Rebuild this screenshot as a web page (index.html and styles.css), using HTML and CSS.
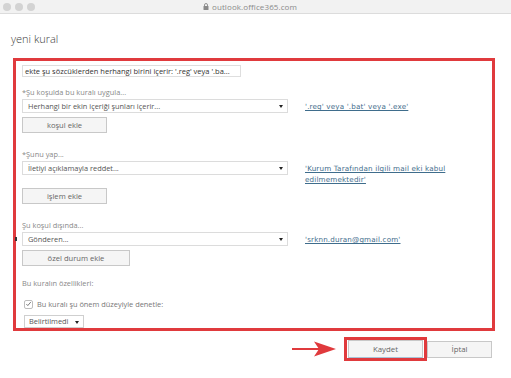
FILE: index.html
```html
<!DOCTYPE html>
<html lang="tr">

<head>
    <meta charset="UTF-8">
    <meta name="viewport" content="width=device-width, initial-scale=1.0">
    <title>yeni kural</title>
    <link rel="stylesheet" href="styles.css">
</head>

<body>

    <div class="titlebar">
        <div class="lights">
            <span></span><span></span><span></span>
        </div>
        <div class="url">
            <svg width="6" height="7" viewBox="0 0 6 7">
                <path d="M1.5 3V2a1.5 1.5 0 0 1 3 0v1" fill="none" stroke="#8a8a8a" stroke-width="0.9" />
                <rect x="0.5" y="3" width="5" height="4" rx="0.5" fill="#8a8a8a" />
            </svg>
            outlook.office365.com
        </div>
    </div>

    <h1 class="page-title">yeni kural</h1>

    <div class="rule-box">
        <div class="keyword">ekte şu sözcüklerden herhangi birini içerir: '.reg' veya '.ba...</div>

        <p class="label first">*Şu koşulda bu kuralı uygula...</p>
        <div class="row">
            <div class="select">Herhangi bir ekin içeriği şunları içerir...</div>
            <a class="value" href="#">'.reg' veya '.bat' veya '.exe'</a>
        </div>
        <button class="btn btn-small">koşul ekle</button>

        <p class="label">*Şunu yap...</p>
        <div class="row row-tight">
            <div class="select">İletiyi açıklamayla reddet...</div>
            <a class="value" href="#">'Kurum Tarafından ilgili mail eki kabul edilmemektedir'</a>
        </div>
        <button class="btn btn-small btn-after-wrap">işlem ekle</button>

        <p class="label">Şu koşul dışında...</p>
        <div class="row row-mark">
            <span class="mark"></span>
            <div class="select">Gönderen...</div>
            <a class="value" href="#">'srknn.duran@gmail.com'</a>
        </div>
        <button class="btn btn-wide">özel durum ekle</button>

        <p class="label props">Bu kuralın özellikleri:</p>
        <label class="check-row">
            <span class="checkbox">
                <svg width="8" height="8" viewBox="0 0 8 8">
                    <path d="M1.6 4.1l1.6 1.7L6.6 1.8" fill="none" stroke="#555" stroke-width="0.9" />
                </svg>
            </span>
            Bu kuralı şu önem düzeyiyle denetle:
        </label>
        <div class="select select-small">Belirtilmedi</div>
    </div>

    <div class="footer">
        <svg class="arrow" width="44" height="16" viewBox="0 0 44 16">
            <rect x="0" y="7" width="28" height="2" fill="#e03a3d" />
            <path d="M22 0.5L44 8 22 15.5 27 8z" fill="#e03a3d" />
        </svg>
        <div class="save-box">
            <button class="btn btn-footer">Kaydet</button>
        </div>
        <button class="btn btn-footer btn-cancel">İptal</button>
    </div>

</body>

</html>
```

FILE: styles.css
```css
body {
    margin: 0;
    background-color: #fff;
    font-family: "Open Sans", "Noto Sans", sans-serif;
    color: #444;
    width: 511px;
    height: 378px;
    overflow: hidden;
}

.titlebar {
    display: flex;
    align-items: center;
    height: 13px;
    background-color: #f2f2f2;
    border-bottom: 1px solid #dcdcdc;
}

.lights {
    display: flex;
    gap: 4px;
    padding-left: 3px;
}

.lights span {
    width: 8px;
    height: 8px;
    border-radius: 50%;
    background-color: #d3d3d3;
}

.url {
    display: flex;
    align-items: center;
    gap: 3px;
    margin-left: 168px;
    font-size: 8px;
    color: #8a8a8a;
    letter-spacing: 0.1px;
}

.page-title {
    margin: 17px 0 0 11px;
    font-size: 11px;
    line-height: 16px;
    font-weight: 300;
    color: #3a3a3a;
}

.rule-box {
    box-sizing: border-box;
    width: 482px;
    height: 273px;
    margin: 11px 0 0 13px;
    padding: 4px 0 0 6px;
    border: 3px solid #e03a3d;
}

.keyword {
    box-sizing: border-box;
    width: 219px;
    height: 12px;
    padding-left: 2px;
    border: 1px solid #dedede;
    font-size: 7.5px;
    line-height: 10px;
    color: #333;
    white-space: nowrap;
    overflow: hidden;
}

.label {
    margin: 16px 0 0;
    font-size: 7.4px;
    line-height: 10px;
    color: #888;
}

.label.first {
    margin-top: 10px;
}

.label.props {
    margin-top: 12px;
}

.row {
    display: flex;
    align-items: flex-start;
    gap: 17px;
    margin-top: 2px;
}

.row-mark {
    position: relative;
}

.mark {
    position: absolute;
    left: -7px;
    top: 5px;
    width: 2px;
    height: 4px;
    background-color: #333;
}

.select {
    box-sizing: border-box;
    position: relative;
    width: 266px;
    height: 14px;
    padding-left: 5px;
    border: 1px solid #dcdcdc;
    font-size: 7.4px;
    line-height: 12px;
    color: #555;
    flex-shrink: 0;
}

.select::after {
    content: "";
    position: absolute;
    right: 4px;
    top: 5px;
    border-left: 2.5px solid transparent;
    border-right: 2.5px solid transparent;
    border-top: 3px solid #222;
}

.select-small {
    width: 60px;
    height: 13px;
    margin: 6px 0 0 2px;
    padding-left: 4px;
    border-color: #cfcfcf;
    line-height: 11px;
}

.value {
    width: 176px;
    padding-top: 2px;
    font-family: "DejaVu Sans", Verdana, sans-serif;
    font-size: 7.2px;
    line-height: 11px;
    letter-spacing: 0.15px;
    color: #3f6d8c;
    text-decoration: underline;
}

.btn {
    display: block;
    box-sizing: border-box;
    margin: 4px 0 0;
    padding: 0;
    height: 16px;
    background-color: #f5f5f5;
    border: 1px solid #c8c8c8;
    font-family: "Open Sans", "Noto Sans", sans-serif;
    font-size: 7.6px;
    color: #666;
}

.btn-small {
    width: 85px;
}

.btn-after-wrap {
    margin-top: 3px;
}

.btn-wide {
    width: 108px;
}

.check-row {
    display: flex;
    align-items: center;
    gap: 4px;
    margin: 11px 0 0 2px;
    height: 10px;
    font-size: 7.4px;
    color: #777;
}

.checkbox {
    display: flex;
    box-sizing: border-box;
    width: 9px;
    height: 9px;
    border: 1px solid #bdbdbd;
    border-radius: 2px;
    align-items: center;
    justify-content: center;
}

.footer {
    display: flex;
    align-items: center;
    justify-content: flex-end;
    margin-top: 6px;
    padding-right: 19px;
}

.arrow {
    margin-right: 8px;
}

.save-box {
    display: flex;
    padding: 0 1px;
    border: 3px solid #e03a3d;
}

.btn-footer {
    margin: 0;
    width: 75px;
    height: 18px;
    font-size: 7.8px;
    color: #666;
}

.save-box .btn-footer {
    border-bottom-color: #a9c3d6;
}

.btn-cancel {
    width: 65px;
    height: 17px;
}
```
